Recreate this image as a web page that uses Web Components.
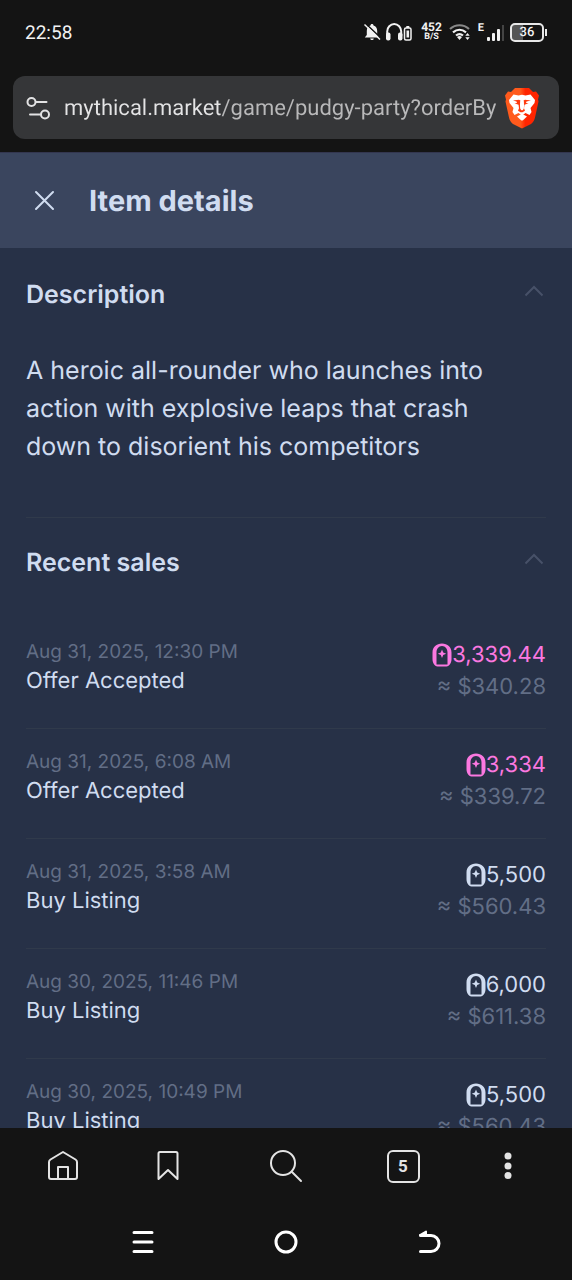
<!DOCTYPE html>
<html lang="en">
<head>
<meta charset="utf-8">
<meta name="viewport" content="width=device-width, initial-scale=1">
<title>Item details</title>
<style>
html, body { height: 100%; margin: 0; background: #141414; text-rendering: geometricPrecision; }
</style>
</head>
<body>
<market-app></market-app>
<script>
const define = (name, html, setup) => {
  const template = document.createElement('template');
  template.innerHTML = html;
  customElements.define(name, class extends HTMLElement {
    constructor() {
      super();
      this.attachShadow({ mode: 'open' }).append(template.content.cloneNode(true));
    }
    connectedCallback() {
      if (setup) setup(this, this.shadowRoot);
    }
  });
};

define('status-bar', `
<style>
:host { display: flex; align-items: center; justify-content: space-between; height: 64px; padding: 0 25px; color: #f2f2f2; font-family: Roboto, sans-serif; }
time { font-size: 19px; }
.icons { display: flex; align-items: center; gap: 4px; }
svg { display: block; }
.rate { display: grid; justify-items: center; font-size: 12px; line-height: 11px; font-weight: 700; padding: 0 3px 0 4px; }
.rate small { font-size: 9px; line-height: 9px; }
.cell { display: flex; align-items: flex-start; margin-left: 3px; font-size: 11px; line-height: 11px; font-weight: 700; }
.battery { display: flex; align-items: center; }
.level { box-sizing: border-box; width: 34px; height: 19px; border: 2px solid #e8e8e8; border-radius: 5px; background: linear-gradient(90deg, #555 36%, transparent 36%); font-size: 13px; line-height: 15px; font-weight: 500; text-align: center; }
.battery::after { content: ""; width: 2px; height: 7px; margin-left: 1px; background: #e8e8e8; }
</style>
<time>22:58</time>
<div class="icons">
  <svg width="18" height="20" viewBox="0 0 18 20" fill="#f2f2f2"><path d="M9 2c1 0 1.500.7 1.500 1.500 2.500.8 3.700 2.700 3.700 5.500v4l2 2.500H1.800L3.800 13V9c0-2.800 1.200-4.700 3.700-5.500C7.500 2.700 8 2 9 2zM7.200 16.500h3.600c-.2 1-.8 1.500-1.800 1.500s-1.600-.5-1.800-1.500z"/><path d="M2.500 1.500l16 15" stroke="#141414" stroke-width="1.500"/><path d="M1.500 2.500l15.500 15" stroke="#f2f2f2" stroke-width="1.500"/></svg>
  <svg width="28" height="20" viewBox="0 0 28 20"><path d="M2.200 14V9.500a7 7.500 0 0 1 14 0V14" fill="none" stroke="#f2f2f2" stroke-width="2"/><rect x="1" y="10.500" width="4.500" height="8" rx="2" fill="#f2f2f2"/><rect x="13" y="10.500" width="4.500" height="8" rx="2" fill="#f2f2f2"/><rect x="19.500" y="6" width="6.500" height="12" rx="1.500" fill="#141414" stroke="#f2f2f2" stroke-width="1.500"/><path d="M21.300 4h3v2h-3zM21.500 8.500h2.600v7h-2.600z" fill="#f2f2f2"/></svg>
  <div class="rate"><span>452</span><small>B/S</small></div>
  <svg width="22" height="18" viewBox="0 0 22 18" fill="none" stroke-width="2.200"><path d="M1 6c5.500-5 13.500-5 19 0" stroke="#888"/><path d="M4 9.300c4-3.400 9-3.400 13 0M7 12.500c2.300-1.900 4.700-1.900 7 0" stroke="#f2f2f2"/><path d="M8 14c1.700-1.300 3.300-1.300 5 0l-2.500 3z" fill="#f2f2f2"/><path d="M18.500 10l2.200 2.700h-4.400zM18.500 17l2.200-2.700h-4.400z" fill="#f2f2f2"/></svg>
  <div class="cell"><span>E</span><svg width="22" height="20" viewBox="0 0 22 20" fill="#f2f2f2"><rect x="3" y="15" width="3" height="4" rx="1"/><rect x="8" y="11" width="3" height="8" rx="1"/><rect x="13" y="7" width="3" height="12" rx="1"/><rect x="18" y="3" width="2" height="16" fill="#444"/></svg></div>
  <div class="battery"><div class="level">36</div></div>
</div>`);

define('address-bar', `
<style>
:host { display: block; padding: 12px 13px 13px; border-bottom: 1px solid #33364f; }
form { display: flex; align-items: center; height: 63px; padding: 0 19px 0 12px; gap: 6px; background: #353638; border-radius: 12px; margin: 0; }
button { display: block; padding: 0; border: 0; background: none; flex: none; }
svg { display: block; }
.settings { padding-right: 6px; }
input { flex: 1; min-width: 0; height: 40px; padding: 2px 0 0; border: 0; outline: 0; color: #b9b9ba; font: 22px Roboto, sans-serif; text-rendering: inherit; background: linear-gradient(90deg, #e4e4e5 157px, #b9b9ba 157px); -webkit-background-clip: text; background-clip: text; -webkit-text-fill-color: transparent; }
</style>
<form>
  <button type="button" class="settings" aria-label="Site settings"><svg width="27" height="26" viewBox="0 0 27 26" fill="none" stroke="#e2e2e3" stroke-width="2" stroke-linecap="round"><circle cx="6.500" cy="7" r="4"/><path d="M11 7h10.500M5 19.500h10.500"/><circle cx="20" cy="19.500" r="4"/></svg></button>
  <input type="text" aria-label="Address" value="mythical.market/game/pudgy-party?orderBy" spellcheck="false">
  <button type="button" aria-label="Shields"><svg width="36" height="42" viewBox="0 0 36 42"><defs><linearGradient id="g"><stop offset=".45" stop-color="#ff5a1c"/><stop offset=".6" stop-color="#ff2500"/></linearGradient></defs><path fill="url(#g)" d="M11 1h14l4 4 3-.5 3 4-1 4 .5 2-3.500 16c-.6 3-2 5-4 6.500L19 41c-.7.500-1.300.500-2 0l-8-4c-2-1.500-3.400-3.500-4-6.500L1.500 14.500l.5-2-1-4 3-4 3 .5z"/><path fill="#fff" d="M9.500 7.500l5 1 3.500-.8 3.500.8 5-1 4.500 5.500-.5 3-4 5 1 4-2 3-4-2-3.500 2.500-3.500-2.500-4 2-2-3 1-4-4-5-.5-3z"/><path fill="#ff3b10" d="M9 13.500l6-.8 1.500.8-.5 5 .5 3.500 1.500 1.500 1.500-1.500.5-3.500-.5-5 1.500-.8 6 .8-4.500 1-.5 1.500 2.500.2-4 1.500-.5 3.500 1 2.500-2.500 1.500h-2l-2.500-1.500 1-2.500-.5-3.500-4-1.500 2.500-.2-.5-1.500z"/><path fill="#fff" d="M16.500 13.500h3l.5 5-.7 3.700-1.300 1-1.300-1-.7-3.700z"/><path fill="#fff" d="M13 29.500l5-2.700 5 2.700-4 3.700q-1 .8-2 0z"/></svg></button>
</form>`);

define('dialog-header', `
<style>
:host { display: flex; align-items: center; height: 95px; padding: 0 32px; gap: 32px; background: #3a455e; color: #d0dcf0; }
button { display: block; padding: 0; border: 0; background: none; }
svg { display: block; }
h1 { margin: 0; font: 700 29px/40px Inter, sans-serif; }
</style>
<button type="button" aria-label="Close"><svg width="25" height="26" viewBox="0 0 25 26" fill="none" stroke="#d0dcf0" stroke-width="2" stroke-linecap="round"><path d="M4 4l17 17M21 4l-17 17"/></svg></button>
<h1><slot></slot></h1>`);

define('detail-section', `
<style>
:host { display: block; color: #d0dcf0; }
header { display: flex; align-items: center; justify-content: space-between; height: 90px; }
h2 { margin: 0; font: 600 25px/38px Inter, sans-serif; }
button { display: block; padding: 0 2px 8px; border: 0; background: none; }
svg { display: block; }
</style>
<header><h2></h2><button type="button" aria-expanded="true" aria-label="Collapse"><svg width="20" height="12" viewBox="0 0 20 12" fill="none" stroke="#475168" stroke-width="2"><path d="M1.500 10.500L10 2l8.500 8.500"/></svg></button></header>
<slot></slot>`, (el, root) => { root.querySelector('h2').textContent = el.getAttribute('heading'); });

define('item-description', `
<style>
:host { display: block; padding: 12px 0 51px; border-bottom: 1px solid #303a4b; }
p { margin: 0; padding-right: 32px; color: #d0dcf0; font: 25px/38px Inter, sans-serif; }
</style>
<p><slot></slot></p>`);

define('sale-row', `
<style>
:host { display: flex; justify-content: space-between; box-sizing: border-box; height: 110px; padding-top: 19px; border-bottom: 1px solid #303a4b; font-family: Inter, sans-serif; color: #d0dcf0; }
time { display: block; font-size: 19px; line-height: 28px; color: #626e86; }
.name { font-size: 22px; line-height: 30px; }
.price { display: flex; align-items: center; justify-content: flex-end; font-size: 22px; line-height: 34px; }
.usd { font-size: 22px; line-height: 30px; color: #626e86; text-align: right; }
:host([accepted]) .price { color: #fb78e0; }
svg { display: block; }
</style>
<div><time></time><div class="name"></div></div>
<div><div class="price"><svg width="20" height="24" viewBox="0 0 20 24" fill="currentColor"><path fill-rule="evenodd" d="M10 .5c5.500 0 9.500 3.500 9.500 9V16c0 4-2 7-5 7.500h-9C2.500 23 .5 20 .5 16V9.500C.5 4 4.500.5 10 .5zM10 3C6.500 3 4.500 6 4.500 9.500v12h11v-12C15.500 6 13.500 3 10 3z"/><path d="M10 6.500l1.200 3 3 1.200-3 1.200-1.200 3-1.200-3-3-1.200 3-1.200z"/></svg><span class="amount"></span></div><div class="usd"></div></div>`,
(el, root) => {
  root.querySelector('time').textContent = el.getAttribute('date');
  root.querySelector('.name').textContent = el.getAttribute('event');
  root.querySelector('.amount').textContent = el.getAttribute('amount');
  root.querySelector('.usd').textContent = '≈ ' + el.getAttribute('usd');
});

define('browser-toolbar', `
<style>
:host { display: grid; grid-template-columns: 106fr 104fr 132fr 102fr 108fr; height: 76px; padding: 0 10px; background: #141414; }
button { display: grid; place-items: center; padding: 0; border: 0; background: none; }
svg { display: block; }
.tabs { box-sizing: border-box; width: 33px; height: 33px; border: 2px solid #e4e4e4; border-radius: 6px; color: #e4e4e4; font: 700 17px/29px Roboto, sans-serif; }
</style>
<button type="button" aria-label="Home"><svg width="32" height="32" viewBox="0 0 32 32" fill="none" stroke="#e4e4e4" stroke-width="2" stroke-linejoin="round"><path d="M4 29h24q2 0 2-2V12q0-1.500-1.500-2.500L16 2 3.500 9.500Q2 10.500 2 12v15q0 2 2 2zM11 29V17h10v12"/></svg></button>
<button type="button" aria-label="Bookmarks"><svg width="22" height="32" viewBox="0 0 22 32" fill="none" stroke="#e4e4e4" stroke-width="2" stroke-linejoin="round"><path d="M1.500 3.500q0-1.500 1.500-1.500h16q1.500 0 1.500 1.500V29L11 20 1.500 29z"/></svg></button>
<button type="button" aria-label="Search"><svg width="34" height="34" viewBox="0 0 34 34" fill="none" stroke="#e4e4e4" stroke-width="2" stroke-linecap="round"><circle cx="14" cy="14" r="12"/><path d="M23 23l9 9"/></svg></button>
<button type="button" aria-label="Tabs"><span class="tabs">5</span></button>
<button type="button" aria-label="Menu"><svg width="8" height="28" viewBox="0 0 8 28" fill="#e4e4e4"><circle cx="4" cy="4" r="3.500"/><circle cx="4" cy="14" r="3.500"/><circle cx="4" cy="23.500" r="3.500"/></svg></button>`);

define('system-nav', `
<style>
:host { display: flex; justify-content: center; gap: 119px; height: 76px; background: #141414; }
button { display: grid; place-items: center; width: 24px; padding: 0; border: 0; background: none; }
svg { display: block; }
</style>
<button type="button" aria-label="Recent apps"><svg width="24" height="24" viewBox="0 0 24 24" stroke="#fff" stroke-width="3" stroke-linecap="round"><path d="M3 2.500h18M3 12h18M3 21.500h18"/></svg></button>
<button type="button" aria-label="Home screen"><svg width="24" height="24" viewBox="0 0 24 24" fill="none" stroke="#fff" stroke-width="3"><circle cx="12" cy="12" r="10"/></svg></button>
<button type="button" aria-label="Back"><svg width="24" height="24" viewBox="0 0 24 24" fill="none" stroke="#fff" stroke-width="3" stroke-linecap="round" stroke-linejoin="round"><path d="M3.500 5.500H14a8 8 0 0 1 0 16H3.500"/><path stroke-width="2" d="M3 5l6-3.500V5z" fill="#fff"/></svg></button>`);

define('market-app', `
<style>
:host { display: flex; flex-direction: column; height: 100vh; background: #141414; }
main { flex: 1; min-height: 0; overflow: hidden; padding: 2px 26px 0; background: #273147; }
.sales { padding-top: 11px; }
</style>
<status-bar></status-bar>
<address-bar></address-bar>
<dialog-header>Item details</dialog-header>
<main>
  <detail-section heading="Description">
    <item-description>A heroic all-rounder who launches into action with explosive leaps that crash down to disorient his competitors</item-description>
  </detail-section>
  <detail-section heading="Recent sales">
    <div class="sales">
      <sale-row accepted date="Aug 31, 2025, 12:30 PM" event="Offer Accepted" amount="3,339.44" usd="$340.28"></sale-row>
      <sale-row accepted date="Aug 31, 2025, 6:08 AM" event="Offer Accepted" amount="3,334" usd="$339.72"></sale-row>
      <sale-row date="Aug 31, 2025, 3:58 AM" event="Buy Listing" amount="5,500" usd="$560.43"></sale-row>
      <sale-row date="Aug 30, 2025, 11:46 PM" event="Buy Listing" amount="6,000" usd="$611.38"></sale-row>
      <sale-row date="Aug 30, 2025, 10:49 PM" event="Buy Listing" amount="5,500" usd="$560.43"></sale-row>
    </div>
  </detail-section>
</main>
<browser-toolbar></browser-toolbar>
<system-nav></system-nav>`);
</script>
</body>
</html>
